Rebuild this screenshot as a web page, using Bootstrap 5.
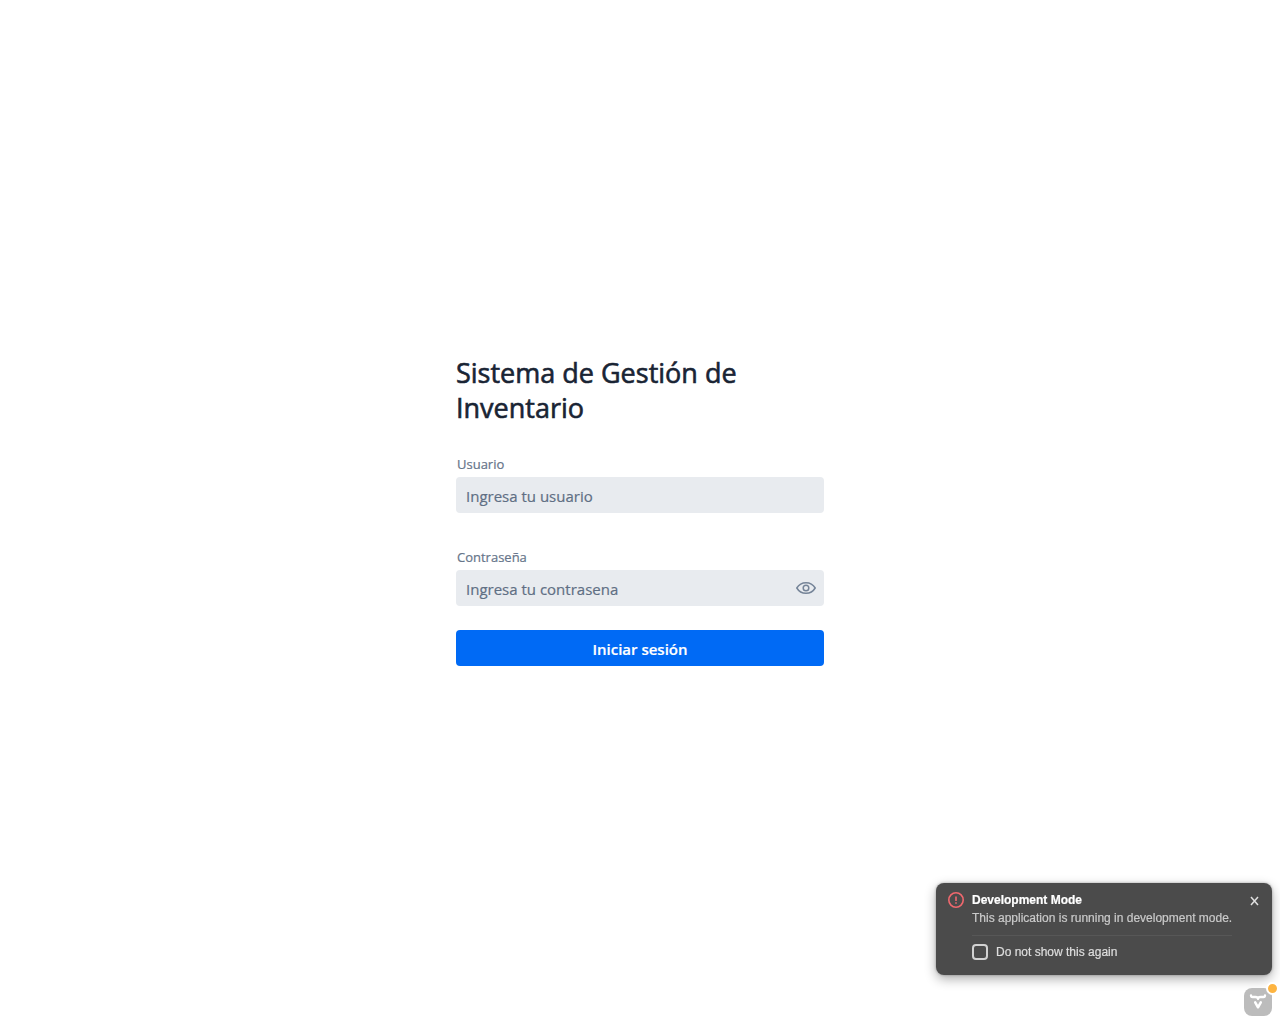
<!DOCTYPE html>
<html lang="es">
<head>
<meta charset="utf-8">
<meta name="viewport" content="width=device-width, initial-scale=1">
<title>Sistema de Gestión de Inventario</title>
<link href="https://cdn.jsdelivr.net/npm/bootstrap@5.3.0/dist/css/bootstrap.min.css" rel="stylesheet">
<style>
body { font-family: "Open Sans", "Noto Sans", sans-serif; color: #192434; background: #fff; }
.login-panel { width: 100%; max-width: 368px; }
.login-title { font-size: 27px; line-height: 35px; font-weight: 500; margin-bottom: 30px; -webkit-text-stroke: .6px; }
.login-label { display: block; font-size: 13px; line-height: 18px; font-weight: 500; color: #66758a; margin: 0 0 4px; padding-left: 1px; -webkit-text-stroke: .2px; }
.login-field { height: 36px; border: 0; border-radius: 4px; background: #e8ebef; color: #192434; font-size: 15px; line-height: 24px; padding: 7px 10px 5px; font-weight: 500; -webkit-text-stroke: .2px; }
.login-field:focus { background: #e8ebef; }
.login-field::placeholder { color: #5f6f84; opacity: 1; }
.user-group { margin-bottom: 35px; }
.pass-group { margin-bottom: 24px; }
.reveal-btn { right: 8px; top: 8px; line-height: 0; color: #758498; }
.login-btn { height: 36px; border: 0; border-radius: 4px; background: #006af5; font-size: 15px; line-height: 24px; font-weight: 600; padding: 7px 12px 5px; -webkit-text-stroke: .2px; }
.dev-area { right: 8px; bottom: 8px; width: 336px; max-width: calc(100vw - 16px); font-family: "Liberation Sans", Arial, sans-serif; font-size: 12px; line-height: 18px; }
.dev-notice { width: 100%; background: #4b4b4b; color: #cacaca; border-radius: 8px; padding: 8px 12px 14px; margin-bottom: 13px; box-shadow: 0 4px 12px rgba(0,0,0,.32), 0 0 3px rgba(0,0,0,.3); -webkit-text-stroke: .2px; }
.dev-heading { color: #fff; font-weight: 700; }
.dev-dismiss { border-top: 1px solid #575757; margin-top: 8px; padding-top: 7px; color: #dedede; }
.dev-check { appearance: none; width: 16px; height: 16px; border: 2px solid #d2d2d2; border-radius: 4px; background: transparent; margin: 0; }
.dev-check:checked { background: #d2d2d2; }
.dev-close { color: #e0e0e0; line-height: 0; margin: 5px 0 0; }
.dev-logo { width: 28px; height: 28px; background: #bcbcbc; border-radius: 8px; }
.dev-dot { width: 13px; height: 13px; right: -7px; top: -6px; background: #fdb441; border: 2px solid #fff; border-radius: 50%; }
</style>
</head>
<body>
<main class="min-vh-100 d-flex align-items-center justify-content-center pb-1">
  <section class="login-panel">
    <h1 class="login-title">Sistema de Gestión de Inventario</h1>
    <form>
      <div class="user-group">
        <label class="login-label" for="usuario">Usuario</label>
        <input class="form-control login-field" id="usuario" type="text" placeholder="Ingresa tu usuario">
      </div>
      <div class="pass-group">
        <label class="login-label" for="contrasena">Contraseña</label>
        <div class="position-relative">
          <input class="form-control login-field pe-5" id="contrasena" type="password" placeholder="Ingresa tu contrasena">
          <button class="reveal-btn btn p-0 border-0 position-absolute" type="button" aria-label="Mostrar contraseña">
            <svg width="20" height="20" viewBox="0 0 20 20" fill="none" stroke="currentColor" stroke-width="1.5"><path d="M.8 10C3 6.3 6.2 4.7 10 4.7S17 6.3 19.2 10C17 13.7 13.8 15.3 10 15.3S3 13.7.8 10Z"/><circle cx="10" cy="10" r="2.8"/></svg>
          </button>
        </div>
      </div>
      <button class="login-btn btn btn-primary w-100" type="submit">Iniciar sesión</button>
    </form>
  </section>
</main>
<aside class="dev-area position-fixed d-flex flex-column align-items-end">
  <div class="dev-notice d-flex align-items-start">
    <svg class="flex-shrink-0 me-2" width="16" height="18" viewBox="0 0 16 18" fill="none" stroke="#f0686e" stroke-width="1.6"><circle cx="8" cy="9" r="7.2"/><path d="M8 5.5V10M8 11.3V12.7"/></svg>
    <div>
      <div class="dev-heading">Development Mode</div>
      <div>This application is running in development mode.</div>
      <div class="dev-dismiss d-flex align-items-center gap-2">
        <input class="dev-check" type="checkbox" id="dismiss">
        <label for="dismiss">Do not show this again</label>
      </div>
    </div>
    <button class="dev-close btn p-0 border-0 ms-auto" type="button" aria-label="Close">
      <svg width="10" height="10" viewBox="0 0 10 10" stroke="currentColor" stroke-width="1.5"><path d="M1 1l7 8M8 1L1 9"/></svg>
    </button>
  </div>
  <button class="dev-logo btn p-0 border-0 position-relative d-flex align-items-center justify-content-center" type="button" aria-label="Vaadin">
    <svg width="28" height="28" viewBox="0 0 28 28" fill="none" stroke="#fff" stroke-linecap="round" stroke-linejoin="round"><path d="M7 7.3V7.6Q7 9 8.500 9H11.500Q14 9 14 11Q14 9 16.500 9H19.500Q21 9 21 7.600V7.300" stroke-width="2.300"/><path d="M11.200 14.300L14 19.300L16.800 14.300" stroke-width="2.500"/></svg>
    <span class="dev-dot position-absolute"></span>
  </button>
</aside>
<script src="https://cdn.jsdelivr.net/npm/bootstrap@5.3.0/dist/js/bootstrap.bundle.min.js"></script>
</body>
</html>
